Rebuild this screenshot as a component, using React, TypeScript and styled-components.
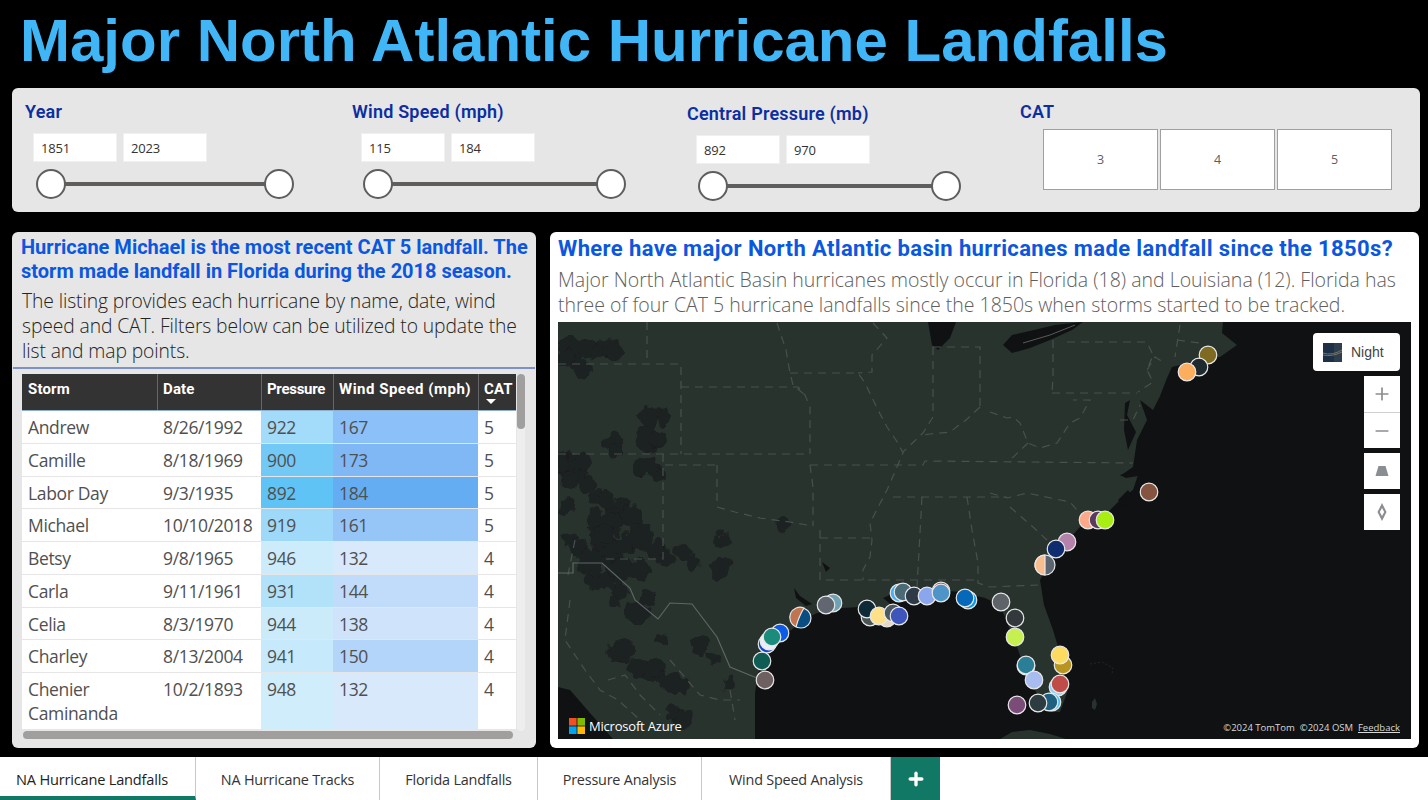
import React from 'react';
import styled, { createGlobalStyle } from 'styled-components';
import { FiPlus, FiMinus } from 'react-icons/fi';

const storms = [
  { name: 'Andrew', date: '8/26/1992', pressure: 922, wind: 167, cat: 5, pBg: '#a3dbfa', wBg: '#8bc0f8' },
  { name: 'Camille', date: '8/18/1969', pressure: 900, wind: 173, cat: 5, pBg: '#72c9f6', wBg: '#80b8f6' },
  { name: 'Labor Day', date: '9/3/1935', pressure: 892, wind: 184, cat: 5, pBg: '#60c3f5', wBg: '#64adf3' },
  { name: 'Michael', date: '10/10/2018', pressure: 919, wind: 161, cat: 5, pBg: '#9fd9fa', wBg: '#96c6f8' },
  { name: 'Betsy', date: '9/8/1965', pressure: 946, wind: 132, cat: 4, pBg: '#cdecfb', wBg: '#d9e9fc' },
  { name: 'Carla', date: '9/11/1961', pressure: 931, wind: 144, cat: 4, pBg: '#b1e2fa', wBg: '#c0dcfa' },
  { name: 'Celia', date: '8/3/1970', pressure: 944, wind: 138, cat: 4, pBg: '#cbebfb', wBg: '#cfe4fb' },
  { name: 'Charley', date: '8/13/2004', pressure: 941, wind: 150, cat: 4, pBg: '#c6e9fb', wBg: '#b3d5f9' },
  { name: 'Chenier Caminanda', date: '10/2/1893', pressure: 948, wind: 132, cat: 4, pBg: '#d0edfb', wBg: '#d9e9fc' },
];

const markers = [
  [1208, 355, '#7f6a22'], [1199, 367, '#1f2a2e'], [1187, 372, '#fbae5e'], [1149, 492, '#845440'],
  [1088, 520, '#fca98a'], [1098, 520, '#5c3a5c'], [1105, 520, '#a9ee12'], [1067, 542, '#b482aa'],
  [1056, 549, '#0f2d6e'], [780, 633, '#0a5be8'], [767, 644, '#0f46c8'], [769, 641, '#e8eef2'], [772, 637, '#1b8c7c'],
  [762, 661, '#0f5c54'], [765, 680, '#6e6060'], [833, 603, '#6fa3b3'], [826, 605, '#616670'],
  [870, 617, '#4a5656'], [867, 609, '#0e2a36'], [887, 618, '#e8d8c0'], [879, 616, '#fde088'],
  [893, 613, '#4a5660'], [899, 616, '#3e55bc'], [899, 593, '#45b0f5'], [903, 592, '#4a6a78'],
  [914, 596, '#2f3a48'], [927, 596, '#8aa6ec'], [941, 591, '#a04848'], [941, 593, '#4e94c8'],
  [968, 600, '#0a98ec'], [965, 598, '#0668b8'], [1001, 602, '#5e636a'], [1015, 618, '#33383c'],
  [1015, 637, '#c6f050'], [1026, 666, '#3a4a90'], [1026, 665, '#2a7e96'], [1034, 680, '#a8bcf0'],
  [1063, 665, '#b89420'], [1060, 655, '#fddb60'], [1058, 687, '#8cd0f8'], [1060, 684, '#be4c48'],
  [1052, 702, '#52c0f8'], [1049, 702, '#1f6080'], [1038, 703, '#2c3c40'], [1017, 705, '#7c4c78'],
] as const;

const land = 'M558 322 L1223 322 L1222 333 L1237 345 L1220 357 L1200 360 L1172 367 L1167 378 L1160 396 L1153 410 L1140 400 L1147 420 L1137 440 L1133 467 L1120 476 L1138 475 L1133 490 L1123 497 L1103 517 L1080 527 L1068 540 L1050 560 L1040 580 L1044 605 L1053 630 L1062 660 L1068 690 L1060 712 L1050 712 L1040 700 L1025 670 L1017 647 L1008 625 L1000 605 L985 598 L960 592 L917 588 L890 595 L883 598 L893 606 L897 622 L880 620 L860 607 L843 608 L817 613 L803 620 L783 637 L770 653 L758 673 L755 693 L755 739 L613 739 L590 713 L570 690 L558 687 Z';

// elevation patches, round blobs roughened by the svg filter below
const blobs = [
  [570, 350, 12], [580, 367, 11], [565, 357, 9], [590, 348, 10], [607, 347, 11], [615, 353, 8], [598, 352, 8],
  [650, 417, 10], [665, 417, 8], [647, 438, 13], [658, 438, 9], [613, 443, 10], [615, 452, 8],
  [573, 467, 15], [583, 463, 10], [562, 463, 9], [587, 483, 9], [570, 480, 9], [598, 497, 9],
  [597, 520, 11], [620, 510, 13], [632, 517, 11], [613, 523, 11], [650, 467, 10], [658, 477, 8],
  [640, 467, 7], [567, 507, 8], [570, 540, 7], [610, 550, 15], [627, 543, 11], [600, 538, 10],
  [657, 550, 9], [640, 537, 13], [683, 553, 8], [693, 563, 7], [723, 540, 9], [720, 568, 11],
  [580, 550, 9], [593, 580, 9], [620, 590, 9], [615, 602, 6], [637, 613, 12], [647, 597, 8],
  [663, 640, 7], [623, 650, 11], [615, 653, 8], [700, 647, 9], [713, 658, 7], [650, 672, 11],
  [637, 667, 10], [673, 683, 11], [683, 685, 7], [730, 683, 7], [682, 718, 11], [673, 713, 7],
  [590, 562, 13], [620, 570, 13], [640, 570, 11], [665, 558, 9], [605, 582, 9], [783, 524, 7], [893, 500, 5],
  [608, 500, 8], [605, 535, 9], [660, 665, 6], [660, 680, 6],
] as const;

const borders = [
  'M558 364 L681 364 L681 454', 'M647 322 L647 364', 'M681 387 L798 387 L805 395 L810 407 L810 454',
  'M558 454 L810 454', 'M663 454 L663 559 L602 559', 'M665 465 L715 465', 'M717 465 L717 507 L735 512 L760 518 L790 522 L813 526',
  'M810 465 L923 465 L925 461 L1133 463', 'M810 465 L813 487 L813 526', 'M777 323 L786 350 L790 373 L793 385 L805 395',
  'M790 373 L858 373 L865 383 L878 410 L887 427 L898 443 L903 453 L897 467 L887 490 L870 523 L872 540 L870 557 L863 570 L863 580',
  'M873 323 L887 338 L872 355 L872 372 L858 373', 'M933 347 L933 410 L933 417 L923 433 L903 452', 'M933 347 L980 347 L980 408',
  'M980 407 L966 420 L950 432 L930 434 L923 435', 'M893 497 L1007 497', 'M922 497 L917 587', 'M967 497 L972 530 L978 563 L978 583 L990 587 L1038 585',
  'M820 530 L820 580 L977 580', 'M820 538 L870 538', 'M990 493 L1007 498 L1027 493 L1070 502 L1089 524', 'M1010 507 L1033 527 L1047 540',
  'M1053 340 L1053 377 L1052 393', 'M1052 393 L1137 393', 'M1067 342 L1147 342 L1153 355 L1147 370 L1153 382 L1138 392',
  'M1147 370 L1155 357 L1163 362', 'M1180 325 L1175 357', 'M1177 340 L1200 343', 'M990 412 L1007 418 L1013 417 L1020 423 L1028 443 L1040 448 L1057 443 L1070 423 L1080 418 L1090 400 L1073 400',
  'M1028 443 L1010 460', 'M1120 420 L1133 420 L1140 405', 'M570 600 L565 640 L585 670 L600 690 L618 700 L640 720',
  'M670 660 L700 695 L720 700 L740 700', 'M730 690 L735 720', 'M608 680 L625 675 L640 695 L660 715', 'M575 540 L568 575',
];

const mexicoLine = 'M558 573 L573 573 L573 563 L602 563 L630 588 L635 600 L658 619 L670 603 L692 604 L717 637 L730 667 L757 678';
const lakes = [
  'M928 322 L956 322 L950 338 L938 350 L932 345 Z',
  'M1003 345 L1012 335 L1030 331 L1055 325 L1083 322 L1072 330 L1050 340 L1030 348 L1012 353 Z',
  'M1125 403 L1130 400 L1127 415 L1136 432 L1128 450 L1124 430 Z',
  'M1120 475 L1137 470 L1138 476 L1126 478 Z',
  'M1118 500 L1128 490 L1133 498 L1124 508 Z',
  'M794 588 L800 596 L812 604 L806 606 L796 598 Z',
  'M822 562 L830 568 L826 572 Z',
];

const App: React.FC = () => {
  return (
    <Page>
      <GlobalStyle />
      <Title>Major North Atlantic Hurricane Landfalls</Title>
      <FilterBar>
        <Slicer>
          <SlicerTitle>Year</SlicerTitle>
          <RangeInputs $inset={8}><RangeInput>1851</RangeInput><RangeInput>2023</RangeInput></RangeInputs>
          <Slider $width={258}><Thumb /><Thumb /></Slider>
        </Slicer>
        <Slicer>
          <SlicerTitle>Wind Speed (mph)</SlicerTitle>
          <RangeInputs $inset={9}><RangeInput>115</RangeInput><RangeInput>184</RangeInput></RangeInputs>
          <Slider $width={263}><Thumb /><Thumb /></Slider>
        </Slicer>
        <Slicer $drop>
          <SlicerTitle>Central Pressure (mb)</SlicerTitle>
          <RangeInputs $inset={9}><RangeInput>892</RangeInput><RangeInput>970</RangeInput></RangeInputs>
          <Slider $width={263}><Thumb /><Thumb /></Slider>
        </Slicer>
        <CatSlicer>
          <SlicerTitle>CAT</SlicerTitle>
          <CatRow>
            <CatBox>3</CatBox>
            <CatBox>4</CatBox>
            <CatBox>5</CatBox>
          </CatRow>
        </CatSlicer>
      </FilterBar>
      <Content>
        <ListCard>
          <ListHeading>Hurricane Michael is the most recent CAT 5 landfall. The storm made landfall in Florida during the 2018 season.</ListHeading>
          <ListText>The listing provides each hurricane by name, date, wind speed and CAT. Filters below can be utilized to update the list and map points.</ListText>
          <TableArea>
            <TableScroll>
              <HeaderRow>
                <HeadCell>Storm</HeadCell>
                <HeadCell>Date</HeadCell>
                <HeadCell $tracking={-0.3}>Pressure</HeadCell>
                <HeadCell $tracking={0.5}>Wind Speed (mph)</HeadCell>
                <HeadCell>CAT<SortCaret /></HeadCell>
              </HeaderRow>
              {storms.map((s) => (
                <Row key={s.name}>
                  <Cell>{s.name}</Cell>
                  <Cell>{s.date}</Cell>
                  <Cell $bg={s.pBg}>{s.pressure}</Cell>
                  <Cell $bg={s.wBg}>{s.wind}</Cell>
                  <Cell>{s.cat}</Cell>
                </Row>
              ))}
              <Row>
                <Cell />
                <Cell />
                <Cell $bg="#c4e8fb" />
                <Cell $bg="#c9e0fb" />
                <Cell />
              </Row>
            </TableScroll>
            <VScroll><VThumb /></VScroll>
            <HScroll />
          </TableArea>
        </ListCard>
        <MapCard>
          <MapHeading>Where have major North Atlantic basin hurricanes made landfall since the 1850s?</MapHeading>
          <MapText>Major North Atlantic Basin hurricanes mostly occur in Florida (18) and Louisiana (12). Florida has three of four CAT 5 hurricane landfalls since the 1850s when storms started to be tracked.</MapText>
          <MapFrame>
            <MapSvg viewBox="558 322 853 417" preserveAspectRatio="none">
              <defs>
                <filter id="rough" x="540" y="310" width="320" height="440" filterUnits="userSpaceOnUse">
                  <feTurbulence type="fractalNoise" baseFrequency="0.09" numOctaves="2" seed="4" />
                  <feDisplacementMap in="SourceGraphic" scale="14" xChannelSelector="R" yChannelSelector="G" />
                </filter>
                <clipPath id="landClip"><path d={land} /></clipPath>
              </defs>
              <rect x="558" y="322" width="853" height="417" fill="#101113" />
              <path d={land} fill="#28332d" />
              <g clipPath="url(#landClip)">
                <g fill="#1f2020" filter="url(#rough)">
                  {blobs.map(([x, y, r]) => <circle key={`${x}-${y}`} cx={x} cy={y} r={r} />)}
                </g>
              </g>
              {lakes.map((d) => <path key={d} d={d} fill="#101113" />)}
              {borders.map((d) => <path key={d} d={d} fill="none" stroke="#4a5050" strokeWidth="1.2" strokeDasharray="8 6" />)}
              <path d={mexicoLine} fill="none" stroke="#5e6666" strokeWidth="1.2" />
              <path d="M1023 343 L1050 335 L1075 325" fill="none" stroke="#565c5c" strokeWidth="1" />
              <path d="M1092 702 l3 -4 l2 6 l-2 6 l-3 -2 Z" fill="#28332d" />
              <path d="M1090 664 L1102 662 L1113 668 L1112 674" fill="none" stroke="#1f2a26" strokeWidth="1" strokeDasharray="2 2" />
              <path d="M1000 739 L1012 732 L1030 730 L1050 734 L1066 739 Z" fill="#28332d" />
              {markers.map(([x, y, c], i) => (
                <circle key={i} cx={x} cy={y} r="8.8" fill={c} stroke="#e8e8e8" strokeWidth="1.2" />
              ))}
              <g stroke="#e8e8e8" strokeWidth="1.2">
                <circle cx="1045" cy="565" r="10" fill="#5a6570" />
                <path d="M1045 555 A10 10 0 0 0 1045 575 Z" fill="#f8bd8e" />
                <circle cx="801" cy="618" r="10" fill="#0a4d80" />
                <path d="M804 608 A10 10 0 0 0 796 627 Q799 616 804 608 Z" fill="#bf7650" />
              </g>
            </MapSvg>
            <StyleButton>
              <svg width="19" height="19" viewBox="0 0 19 19">
                <rect width="19" height="19" fill="#1c3146" />
                <rect x="11" width="8" height="19" fill="#2d3e4f" />
                <path d="M0 10 Q9 13 19 7 M0 12 Q9 14 19 9" stroke="#8a8270" strokeWidth="0.8" fill="none" />
              </svg>
              Night
            </StyleButton>
            <ControlStack>
              <ZoomGroup>
                <MapButton><FiPlus size={20} /></MapButton>
                <MapButton $divided><FiMinus size={20} /></MapButton>
              </ZoomGroup>
              <MapButton>
                <svg width="14" height="12" viewBox="0 0 14 12"><path d="M3.5 1 H10.5 L13.5 11 H0.5 Z" fill="#8a8d91" /></svg>
              </MapButton>
              <MapButton>
                <svg width="10" height="18" viewBox="0 0 10 18"><path fillRule="evenodd" d="M5 0 L9.5 9 L5 18 L0.5 9 Z M5 5 L2.8 9 L5 13 L7.2 9 Z" fill="#8a8d91" /></svg>
              </MapButton>
            </ControlStack>
            <AzureLogo>
              <svg width="16" height="16" viewBox="0 0 16 16">
                <rect width="7.6" height="7.6" fill="#f25022" />
                <rect x="8.4" width="7.6" height="7.6" fill="#7fba00" />
                <rect y="8.4" width="7.6" height="7.6" fill="#00a4ef" />
                <rect x="8.4" y="8.4" width="7.6" height="7.6" fill="#ffb900" />
              </svg>
              Microsoft Azure
            </AzureLogo>
            <Copyright>©2024 TomTom&nbsp; ©2024 OSM&nbsp; <u>Feedback</u></Copyright>
          </MapFrame>
        </MapCard>
      </Content>
      <TabBar>
        <Tab $width={196} $active>NA Hurricane Landfalls</Tab>
        <Tab $width={184}>NA Hurricane Tracks</Tab>
        <Tab $width={158}>Florida Landfalls</Tab>
        <Tab $width={164}>Pressure Analysis</Tab>
        <Tab $width={189}>Wind Speed Analysis</Tab>
        <AddTab><FiPlus size={20} strokeWidth={4} /></AddTab>
      </TabBar>
    </Page>
  );
};

export default App;

const GlobalStyle = createGlobalStyle`
  html, body { margin: 0; padding: 0; background: #000; }
  * { box-sizing: border-box; }
`;

const din = `"Roboto", "Liberation Sans", sans-serif`;
const segoe = `"Open Sans", "Noto Sans", sans-serif`;

const Page = styled.div`
  width: 1428px;
  height: 800px;
  overflow: hidden;
  background: #000;
  display: flex;
  flex-direction: column;
`;

const Title = styled.h1`
  margin: 0;
  height: 88px;
  padding-left: 20px;
  font: 700 60px/82px "Liberation Sans", Arial, sans-serif;
  color: #41b6f6;
  white-space: nowrap;
`;

const FilterBar = styled.div`
  margin: 0 8px 0 12px;
  height: 124px;
  background: #e6e6e6;
  border-radius: 6px;
  display: grid;
  grid-template-columns: 327px 335px 333px 1fr;
  padding: 13px 0 0 13px;
`;

const Slicer = styled.div<{ $drop?: boolean }>`
  display: flex;
  flex-direction: column;
  margin-top: ${(p) => (p.$drop ? '2px' : '0')};
`;

const CatSlicer = styled.div`
  display: flex;
  flex-direction: column;
`;

const SlicerTitle = styled.div`
  font: 600 18px/22px ${din};
  letter-spacing: 0.2px;
  color: #0d2ea0;
  white-space: nowrap;
`;

const RangeInputs = styled.div<{ $inset: number }>`
  display: flex;
  gap: 6px;
  margin: 10px 0 0 ${(p) => p.$inset}px;
`;

const RangeInput = styled.div`
  width: 84px;
  height: 29px;
  background: #fff;
  border: 1px solid #f0f0f0;
  padding-left: 7px;
  font: 400 13px/28px ${segoe};
  letter-spacing: -0.2px;
  color: #333;
`;

const Slider = styled.div<{ $width: number }>`
  position: relative;
  width: ${(p) => p.$width}px;
  height: 30px;
  margin: 7px 0 0 11px;
  display: flex;
  align-items: center;
  justify-content: space-between;

  &::before {
    content: '';
    position: absolute;
    left: 15px;
    right: 15px;
    top: 13px;
    height: 4px;
    background: #605e5c;
  }
`;

const Thumb = styled.div`
  position: relative;
  width: 30px;
  height: 30px;
  border-radius: 50%;
  background: #fff;
  border: 2px solid #605e5c;
`;

const CatRow = styled.div`
  display: flex;
  gap: 2px;
  margin: 6px 0 0 23px;
`;

const CatBox = styled.div`
  width: 115px;
  height: 61px;
  background: #fff;
  border: 1.5px solid #a0a0a0;
  display: flex;
  align-items: center;
  justify-content: center;
  font: 400 12.5px ${segoe};
  color: #605e5c;
`;

const Content = styled.div`
  flex: 1;
  display: grid;
  grid-template-columns: 524px 869px;
  gap: 14px;
  padding: 20px 9px 9px 12px;
  min-height: 0;
`;

const ListCard = styled.div`
  background: #e6e6e6;
  border-radius: 6px;
  padding-top: 3px;
  display: flex;
  flex-direction: column;
  min-height: 0;
`;

const ListHeading = styled.div`
  margin: 0 4px 0 9px;
  font: 700 20px/24px ${din};
  color: #0b57e0;
`;

const ListText = styled.div`
  margin: 5px 6px 4px 10px;
  font: 300 19.3px/25px ${segoe};
  letter-spacing: -0.1px;
  color: #252423;
`;

const TableArea = styled.div`
  position: relative;
  flex: 1;
  min-height: 0;
  border-top: 2px solid #8090c8;
  margin: 0 1px;
  padding: 5px 0 0 9px;
  overflow: hidden;
`;

const TableScroll = styled.div`
  width: 494px;
  height: 356px;
  overflow: hidden;
`;

const columns = '135px 104px 72px 145px 38px';

const HeaderRow = styled.div`
  display: grid;
  grid-template-columns: ${columns};
  height: 37px;
  background: #333;
  border-bottom: 1px solid #8db0d0;
`;

const HeadCell = styled.div<{ $tracking?: number }>`
  position: relative;
  padding: 7px 0 0 5px;
  border-left: 1px solid #666;
  font: 700 15px/17px ${din};
  letter-spacing: ${(p) => p.$tracking ?? 0.15}px;
  color: #fff;
  white-space: nowrap;

  &:first-child { border-left: 0; padding-left: 6px; }
`;

const SortCaret = styled.span`
  position: absolute;
  left: 7px;
  top: 25px;
  width: 0;
  height: 0;
  border-left: 5px solid transparent;
  border-right: 5px solid transparent;
  border-top: 5px solid #fff;
`;

const Row = styled.div`
  display: grid;
  grid-template-columns: ${columns};
  background: #fff;
  border-bottom: 1px solid #e6e6e6;
  font: 400 17.5px/24px ${segoe};
  letter-spacing: -0.35px;
  color: #505050;
`;

const Cell = styled.div<{ $bg?: string }>`
  padding: 4px 6px 3.75px 6px;
  min-height: 31.75px;
  background: ${(p) => p.$bg || 'transparent'};
`;

const VScroll = styled.div`
  position: absolute;
  top: 5px;
  left: 504px;
  width: 8px;
  height: 357px;
  background: #eee;
  border-radius: 4px;
`;

const VThumb = styled.div`
  height: 55px;
  background: #a19f9d;
  border-radius: 4px;
`;

const HScroll = styled.div`
  position: absolute;
  left: 10px;
  top: 362px;
  width: 490px;
  height: 8px;
  background: #a19f9d;
  border-radius: 4px;
`;

const MapCard = styled.div`
  background: #fff;
  border-radius: 6px;
  padding: 4px 8px 9px 8px;
  display: flex;
  flex-direction: column;
  min-height: 0;
`;

const MapHeading = styled.div`
  font: 700 22px/26px ${din};
  letter-spacing: 0.38px;
  color: #0b57e0;
  white-space: nowrap;
`;

const MapText = styled.div`
  margin-top: 5px;
  font: 300 19.5px/25px ${segoe};
  color: #605e5c;
`;

const MapFrame = styled.div`
  position: relative;
  flex: 1;
  min-height: 0;
  margin-top: 5px;
`;

const MapSvg = styled.svg`
  display: block;
  width: 100%;
  height: 100%;
`;

const StyleButton = styled.div`
  position: absolute;
  top: 11px;
  right: 11px;
  width: 87px;
  height: 38px;
  background: #fff;
  border-radius: 4px;
  display: flex;
  align-items: center;
  gap: 9px;
  padding-left: 10px;
  font: 400 14px "Liberation Sans", sans-serif;
  color: #444;
`;

const ControlStack = styled.div`
  position: absolute;
  top: 54px;
  right: 11px;
  display: flex;
  flex-direction: column;
  gap: 5px;
`;

const ZoomGroup = styled.div`
  display: flex;
  flex-direction: column;
`;

const MapButton = styled.div<{ $divided?: boolean }>`
  width: 36px;
  height: 36px;
  background: #fff;
  border-top: ${(p) => (p.$divided ? '1px solid #d0d0d0' : '0')};
  display: flex;
  align-items: center;
  justify-content: center;
  color: #8a8d91;
`;

const AzureLogo = styled.div`
  position: absolute;
  left: 11px;
  bottom: 4px;
  display: flex;
  align-items: center;
  gap: 4px;
  font: 400 13px ${segoe};
  letter-spacing: -0.2px;
  color: #fff;
`;

const Copyright = styled.div`
  position: absolute;
  right: 11px;
  bottom: 5px;
  font: 400 9.5px ${segoe};
  color: #d8d8d8;
`;

const TabBar = styled.div`
  height: 43px;
  background: #fff;
  display: flex;
  flex-shrink: 0;
`;

const Tab = styled.div<{ $width: number; $active?: boolean }>`
  width: ${(p) => p.$width}px;
  border-right: 1px solid #c8c8c8;
  border-bottom: ${(p) => (p.$active ? '4px solid #117865' : '0')};
  padding-top: ${(p) => (p.$active ? '4px' : '2px')};
  padding-right: ${(p) => (p.$active ? '11px' : '0')};
  display: flex;
  align-items: center;
  justify-content: center;
  font: ${(p) => (p.$active ? '500 14.6px' : '400 14.4px')} ${segoe};
  letter-spacing: -0.2px;
  color: ${(p) => (p.$active ? '#222' : '#333')};
`;

const AddTab = styled.div`
  width: 49px;
  background: #117865;
  color: #fff;
  display: flex;
  align-items: center;
  justify-content: center;
`;
